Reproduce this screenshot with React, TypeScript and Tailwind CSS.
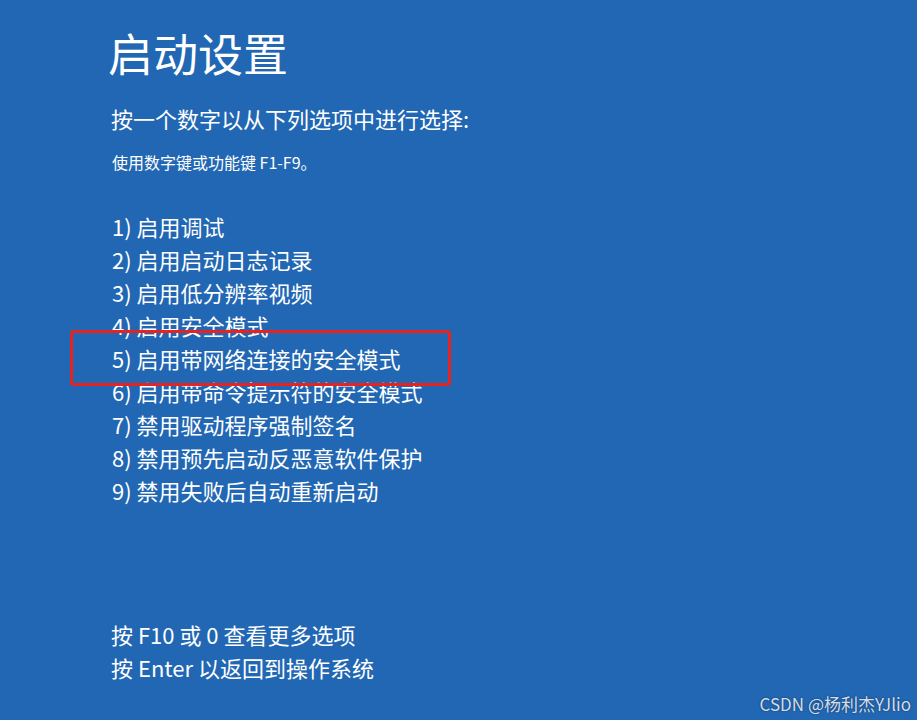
const options = [
  "1) 启用调试",
  "2) 启用启动日志记录",
  "3) 启用低分辨率视频",
  "4) 启用安全模式",
  "5) 启用带网络连接的安全模式",
  "6) 启用带命令提示符的安全模式",
  "7) 禁用驱动程序强制签名",
  "8) 禁用预先启动反恶意软件保护",
  "9) 禁用失败后自动重新启动",
];

export default function App() {
  return (
    <div
      className="relative h-[720px] w-full overflow-hidden bg-[#2167b3] text-white"
      style={{ fontFamily: '"Noto Sans CJK SC", "Noto Sans", sans-serif' }}
    >
      <div className="flex flex-col pl-[111px]">
        {/* Header */}
        <h1 className="-ml-[3px] mt-[25px] text-[45px] font-normal leading-[56px]">启动设置</h1>
        <p className="mt-[22px] text-[22px] leading-[30px]">按一个数字以从下列选项中进行选择:</p>
        <p className="ml-[1px] mt-[19px] text-[16px] leading-[20px]">使用数字键或功能键 F1-F9。</p>

        {/* Options */}
        <ul className="ml-[1px] mt-[38px] flex flex-col">
          {options.map((o) => (
            <li key={o} className="text-[22px] leading-[33px]">
              {o}
            </li>
          ))}
        </ul>

        {/* Footer */}
        <div className="mt-[111px] flex flex-col text-[22px] leading-[33px]">
          <span>按 F10 或 0 查看更多选项</span>
          <span>按 Enter 以返回到操作系统</span>
        </div>
      </div>

      {/* highlight */}
      <div className="absolute left-[70px] top-[330px] h-[56px] w-[381px] rounded-[4px] border-[3px] border-[#e8231f]" />

      {/* watermark */}
      <div className="absolute bottom-[6px] right-[6px] text-[17px] leading-[20px] text-[#d5dde8] [text-shadow:0_0_2px_rgba(0,0,0,0.5)]">
        CSDN @杨利杰YJlio
      </div>
    </div>
  );
}
